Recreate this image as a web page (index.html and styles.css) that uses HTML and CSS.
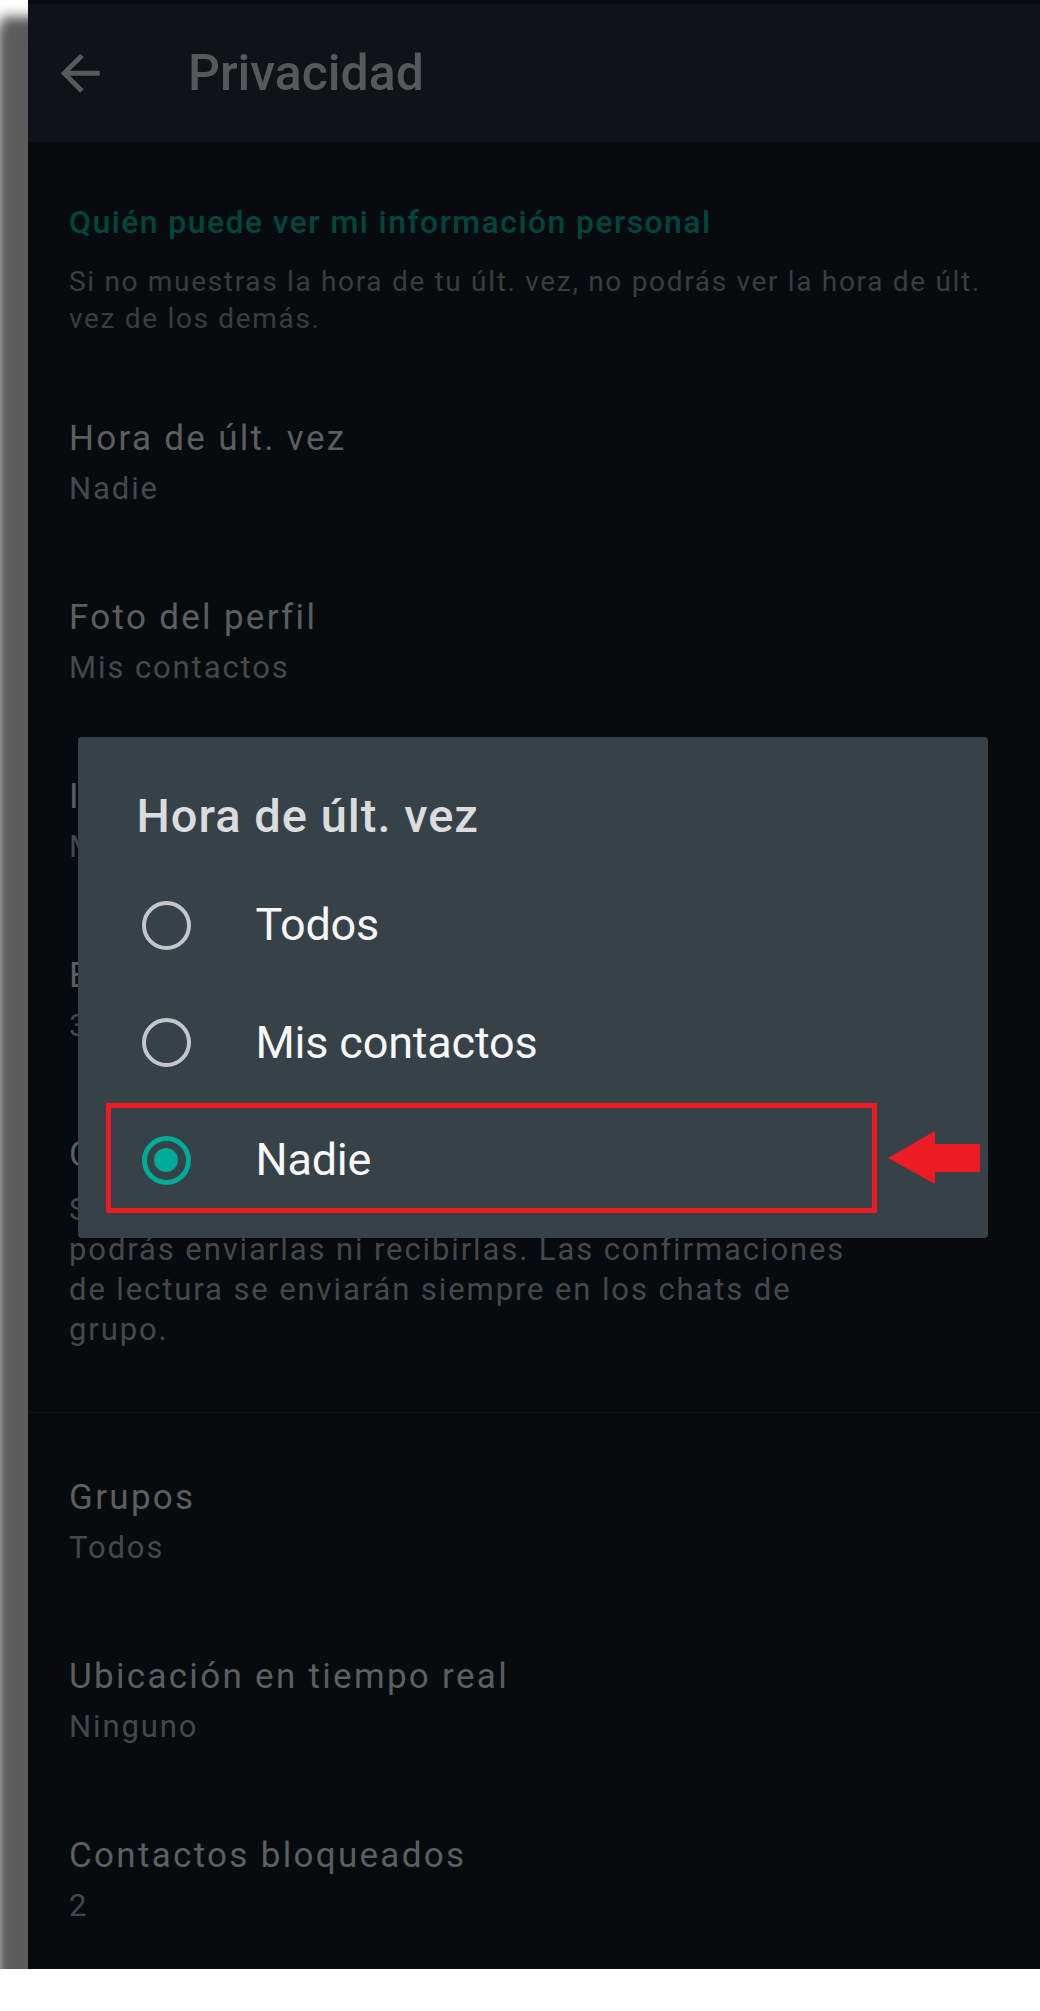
FILE: index.html
```html
<!DOCTYPE html>
<html lang="es">
<head>
  <meta charset="UTF-8">
  <meta name="viewport" content="width=device-width, initial-scale=1.0">
  <title>Privacidad</title>
  <link rel="stylesheet" href="styles.css">
</head>
<body>
  <div class="screen">
    <div class="statusbar"></div>
    <header class="toolbar">
      <svg class="back" viewBox="0 0 24 24"><path d="M20 11H7.83l5.59-5.59L12 4l-8 8 8 8 1.41-1.41L7.83 13H20v-2z"/></svg>
      <h1>Privacidad</h1>
    </header>

    <section class="group">
      <div class="group-head">
        <h2>Quién puede ver mi información personal</h2>
        <p>Si no muestras la hora de tu últ. vez, no podrás ver la hora de últ.<br>vez de los demás.</p>
      </div>
      <div class="item">
        <div class="title">Hora de últ. vez</div>
        <div class="sub">Nadie</div>
      </div>
      <div class="item">
        <div class="title">Foto del perfil</div>
        <div class="sub">Mis contactos</div>
      </div>
      <div class="item">
        <div class="title">Info.</div>
        <div class="sub">Mis contactos</div>
      </div>
      <div class="item">
        <div class="title">Estado</div>
        <div class="sub">3 contactos excluidos</div>
      </div>
      <div class="item item-long">
        <div class="title">Confirmaciones de lectura</div>
        <div class="sub">Si desactivas las confirmaciones de lectura, no<br>podrás enviarlas ni recibirlas. Las confirmaciones<br>de lectura se enviarán siempre en los chats de<br>grupo.</div>
      </div>
    </section>

    <section class="group group-next">
      <div class="item">
        <div class="title">Grupos</div>
        <div class="sub">Todos</div>
      </div>
      <div class="item">
        <div class="title">Ubicación en tiempo real</div>
        <div class="sub">Ninguno</div>
      </div>
      <div class="item">
        <div class="title">Contactos bloqueados</div>
        <div class="sub">2</div>
      </div>
    </section>

    <!-- selector abierto sobre la lista -->
    <div class="dialog">
      <h3>Hora de últ. vez</h3>
      <div class="option"><span class="radio"></span>Todos</div>
      <div class="option"><span class="radio"></span>Mis contactos</div>
      <div class="option on"><span class="radio"></span>Nadie</div>
      <span class="mark"></span>
      <svg class="pointer" viewBox="0 0 92 53"><polygon points="0,27 47,0 47,13 92,13 92,41 47,41 47,53"/></svg>
    </div>
  </div>
</body>
</html>
```

FILE: styles.css
```css
* { margin: 0; padding: 0; box-sizing: border-box; }
html, body { background: #fff; font-family: Roboto, "Liberation Sans", sans-serif; }

.screen { position: relative; margin-left: 28px; height: 1969px; background: #070b0e; overflow: hidden;
  box-shadow: -27px 27px 12px #5c5c5c, -27px 17px 12px #5c5c5c; }
.statusbar { height: 4px; background: #080a0d; }

.toolbar { height: 138px; background: #0f1216; display: flex; align-items: center; padding-left: 23px; }
.toolbar .back { width: 58.5px; height: 58.5px; fill: #58595b; flex: none; }
.toolbar h1 { margin-left: 78.5px; font-size: 50px; font-weight: 500; color: #56585a; line-height: 1; }

.group-head { padding: 60px 41px 37px; }
.group-head h2 { font-size: 32px; line-height: 40px; font-weight: 500; color: #00463c; letter-spacing: 1.4px; }
.group-head p { margin-top: 22px; font-size: 28px; line-height: 36.5px; color: #3a3d3f; letter-spacing: 1.68px; }

.item { padding: 40px 41px 39px; }
.item .title { font-size: 35px; line-height: 50px; color: #5c5e60; letter-spacing: 2.3px; white-space: nowrap; }
.item .sub { font-size: 31px; line-height: 50px; color: #45484a; letter-spacing: 1.9px; white-space: nowrap; }
.item-long { padding-bottom: 62px; }
.item-long .sub { margin-top: 10px; line-height: 40px; }

.group-next { border-top: 1px solid #121619; padding-top: 20px; }

.dialog { position: absolute; left: 50px; top: 737px; width: 910px; background: #374148; border-radius: 4px; padding: 51px 0 19px; }
.dialog h3 { padding-left: 58.5px; margin-bottom: 22.5px; font-size: 47px; line-height: 56px; font-weight: 500; color: #dadcdd; letter-spacing: 1px; }
.option { display: flex; align-items: center; gap: 65px; height: 117.5px; padding-left: 63.5px; font-size: 45px; line-height: 54px; color: #f7f7f7; letter-spacing: -0.2px; }
.radio { width: 49px; height: 49px; flex: none; border: 4.5px solid #c4c7c9; border-radius: 50%; display: flex; align-items: center; justify-content: center; }
.option.on .radio { border: 5px solid #00ab98; }
.option.on .radio::after { content: ""; width: 24px; height: 24px; border-radius: 50%; background: #00ab98; }

.mark { position: absolute; left: 28px; top: 366px; width: 771px; height: 110px; border: 5px solid #ed1c24; }
.pointer { position: absolute; left: 810px; top: 394px; width: 92px; height: 53px; fill: #ed1c24; }
```
